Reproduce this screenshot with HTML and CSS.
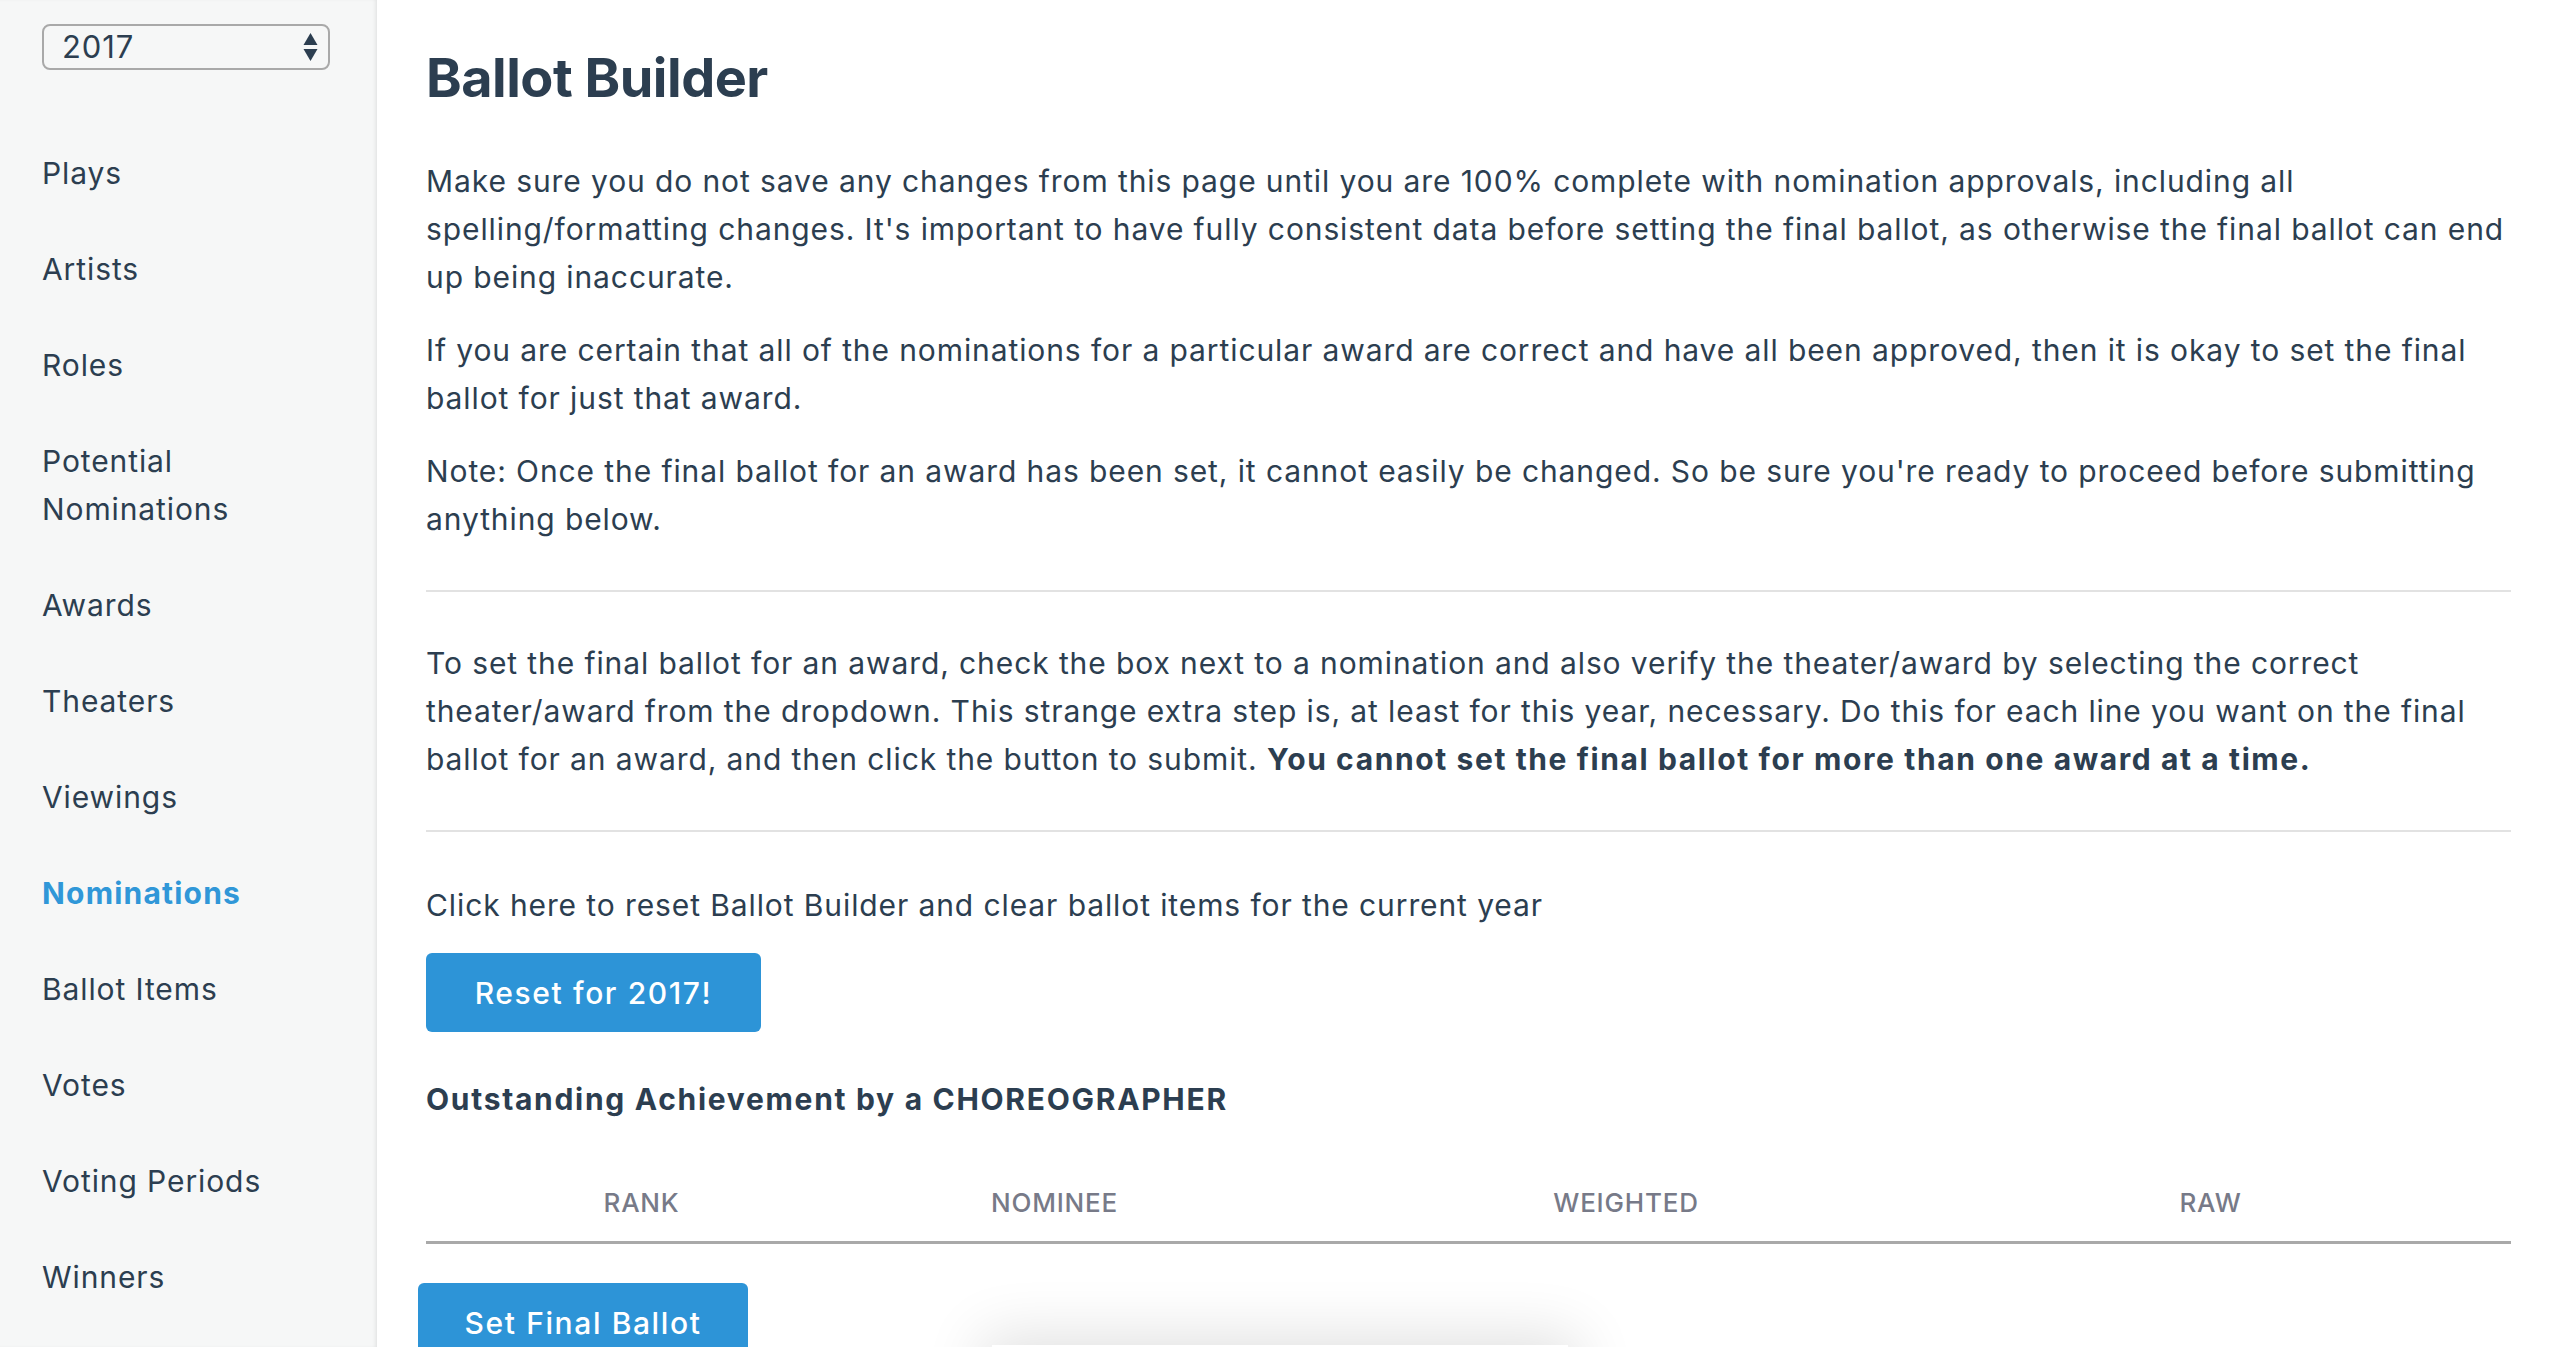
FILE: index.html
```html
<!DOCTYPE html>
<html lang="en">
<head>
<meta charset="utf-8">
<title>Ballot Builder</title>
<link rel="stylesheet" href="styles.css">
</head>
<body>
<div class="app">
  <aside class="sidebar">
    <div class="year-select">
      <span class="year-value">2017</span>
      <svg class="year-arrows" width="15" height="30" viewBox="0 0 15 30"><path d="M7.5 1 L14.5 13 L0.5 13 Z" fill="#2c3e50"/><path d="M0.5 17 L14.5 17 L7.5 29 Z" fill="#2c3e50"/></svg>
    </div>
    <nav class="nav">
      <a class="nav-item">Plays</a>
      <a class="nav-item">Artists</a>
      <a class="nav-item">Roles</a>
      <a class="nav-item">Potential<br>Nominations</a>
      <a class="nav-item">Awards</a>
      <a class="nav-item">Theaters</a>
      <a class="nav-item">Viewings</a>
      <a class="nav-item active">Nominations</a>
      <a class="nav-item">Ballot Items</a>
      <a class="nav-item">Votes</a>
      <a class="nav-item">Voting Periods</a>
      <a class="nav-item">Winners</a>
    </nav>
  </aside>
  <main class="main">
    <h1 class="title">Ballot Builder</h1>
    <p class="para">Make sure you do not save any changes from this page until you are 100% complete with nomination approvals, including all spelling/formatting changes. It's important to have fully consistent data before setting the final ballot, as otherwise the final ballot can end up being inaccurate.</p>
    <p class="para">If you are certain that all of the nominations for a particular award are correct and have all been approved, then it is okay to set the final ballot for just that award.</p>
    <p class="para">Note: Once the final ballot for an award has been set, it cannot easily be changed. So be sure you're ready to proceed before submitting anything below.</p>
    <hr class="rule">
    <p class="para para-mid">To set the final ballot for an award, check the box next to a nomination and also verify the theater/award by selecting the correct theater/award from the dropdown. This strange extra step is, at least for this year, necessary. Do this for each line you want on the final ballot for an award, and then click the button to submit. <strong>You cannot set the final ballot for more than one award at a time.</strong></p>
    <hr class="rule rule-second">
    <p class="para para-click">Click here to reset Ballot Builder and clear ballot items for the current year</p>
    <button class="btn btn-reset">Reset for 2017!</button>
    <h3 class="award-title">Outstanding Achievement by a CHOREOGRAPHER</h3>
    <table class="ballot-table">
      <colgroup>
        <col class="c-rank"><col class="c-nominee"><col class="c-weighted"><col class="c-raw"><col class="c-check">
      </colgroup>
      <thead>
        <tr><th>RANK</th><th>NOMINEE</th><th>WEIGHTED</th><th>RAW</th><th></th></tr>
      </thead>
    </table>
    <button class="btn btn-set">Set Final Ballot</button>
  </main>
</div>
<div class="toast-shadow"></div>
</body>
</html>
```
FILE: styles.css
```css
html, body {
  margin: 0;
  padding: 0;
  background: #ffffff;
}
body {
  font-family: Inter, "Noto Sans", "Liberation Sans", sans-serif;
  color: #2c3e50;
  font-size: 30px;
  line-height: 48px;
  letter-spacing: 0.9px;
  overflow: hidden;
  height: 1347px;
}
.app {
  display: flex;
  height: 1347px;
}
.sidebar {
  width: 377px;
  flex: 0 0 377px;
  background: #f6f7f7;
  box-shadow: inset -3px 0 4px -2px rgba(0,0,0,0.10);
  padding-top: 24px;
  box-sizing: border-box;
}
.year-select {
  margin-left: 42px;
  width: 288px;
  height: 46px;
  box-sizing: border-box;
  border: 2px solid #a9a9a9;
  border-radius: 8px;
  display: flex;
  align-items: center;
  justify-content: space-between;
  padding: 0 10px 0 18px;
  font-size: 31px;
  line-height: 40px;
}
.year-value {
  color: #2c3e50;
}
.year-arrows {
  display: block;
}
.nav {
  display: flex;
  flex-direction: column;
  margin-top: 55px;
}
.nav-item {
  display: block;
  padding: 24px 0 24px 42px;
  color: #2c3e50;
  text-decoration: none;
  font-size: 30px;
  line-height: 48px;
}
.nav-item.active {
  color: #3097d8;
  font-weight: 700;
  letter-spacing: 1.2px;
}
.main {
  flex: 1;
  padding: 45px 49px 0 49px;
  min-width: 0;
}
.title {
  margin: 0;
  font-size: 54px;
  line-height: 65px;
  font-weight: 700;
  letter-spacing: -0.5px;
}
.para {
  margin: 47px 0 0;
}
.para + .para {
  margin-top: 25px;
}
.para strong {
  letter-spacing: 1.6px;
}
.rule {
  border: 0;
  border-top: 2px solid #e2e2e2;
  margin: 47px 0 0;
}
.para-mid {
  margin-top: 47px;
}
.rule-second {
  margin-top: 47px;
}
.para-click {
  margin-top: 49px;
}
.btn {
  display: block;
  background: #2d94d7;
  color: #ffffff;
  border: 0;
  border-radius: 6px;
  font-family: Inter, "Noto Sans", "Liberation Sans", sans-serif;
  font-size: 30px;
  font-weight: 500;
  line-height: 40px;
  letter-spacing: 1.6px;
  cursor: pointer;
}
.btn-reset {
  margin-top: 24px;
  width: 335px;
  height: 79px;
}
.award-title {
  margin: 43px 0 0;
  font-size: 30px;
  line-height: 48px;
  font-weight: 700;
  letter-spacing: 1.7px;
}
.ballot-table {
  margin-top: 24px;
  width: 100%;
  border-collapse: collapse;
  table-layout: fixed;
}
.c-rank { width: 431px; }
.c-nominee { width: 395px; }
.c-weighted { width: 748px; }
.c-raw { width: 421px; }
.c-check { width: 90px; }
.ballot-table th {
  font-size: 26px;
  line-height: 40px;
  font-weight: 500;
  color: #777a88;
  letter-spacing: 0.8px;
  text-align: center;
  padding: 36px 0 18px;
  border-bottom: 3px solid #a9a9a9;
}
.btn-set {
  margin-top: 39px;
  margin-left: -8px;
  width: 330px;
  height: 79px;
}
.toast-shadow {
  position: fixed;
  left: 992px;
  top: 1345px;
  width: 576px;
  height: 80px;
  background: #ffffff;
  box-shadow: 0 0 60px 10px rgba(0,0,0,0.12);
}
```
